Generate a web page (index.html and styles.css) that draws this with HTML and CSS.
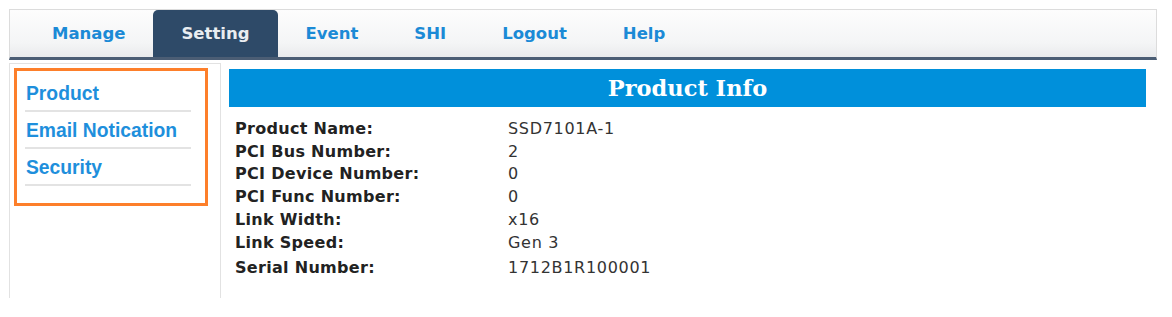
FILE: index.html
```html
<!DOCTYPE html>
<html lang="en">
<head>
    <meta charset="UTF-8">
    <title>Setting - Product Info</title>
    <link rel="stylesheet" href="styles.css">
</head>
<body>
<div class="page">
    <div class="topnav">
        <a class="tab">Manage</a>
        <a class="tab active">Setting</a>
        <a class="tab">Event</a>
        <a class="tab">SHI</a>
        <a class="tab">Logout</a>
        <a class="tab">Help</a>
    </div>

    <div class="main">
        <div class="sidebar">
            <ul class="side-menu">
                <li>Product</li>
                <li>Email Notication</li>
                <li>Security</li>
            </ul>
        </div>

        <div class="content">
            <div class="content-title">Product Info</div>
            <div class="info">
                <div class="info-line"><span class="label">Product Name:</span><span class="value">SSD7101A-1</span></div>
                <div class="info-line"><span class="label">PCI Bus Number:</span><span class="value">2</span></div>
                <div class="info-line"><span class="label">PCI Device Number:</span><span class="value">0</span></div>
                <div class="info-line"><span class="label">PCI Func Number:</span><span class="value">0</span></div>
                <div class="info-line"><span class="label">Link Width:</span><span class="value">x16</span></div>
                <div class="info-line"><span class="label">Link Speed:</span><span class="value">Gen 3</span></div>
                <div class="info-line last"><span class="label">Serial Number:</span><span class="value">1712B1R100001</span></div>
            </div>
        </div>
    </div>
</div>
</body>
</html>
```

FILE: styles.css
```css
*{
    padding: 0;
    margin: 0;
    box-sizing: border-box;
}
body{
    background: #fff;
    font-family: "DejaVu Sans", Verdana, sans-serif;
}
.page{
    padding: 9px 15px 0 9px;
}
.topnav{
    display: flex;
    height: 51px;
    padding-left: 14px;
    border: 1px solid #dcdcdc;
    border-bottom: 3px solid #4b5d74;
    background: linear-gradient(#fdfdfd, #f4f5f6 70%, #e9eaec);
}
.tab{
    display: block;
    padding: 1px 28px 0;
    line-height: 46px;
    font-size: 16.5px;
    font-weight: bold;
    color: #1b8ad6;
}
.tab.active{
    background: #2e4a68;
    color: #e9edf1;
    border-radius: 5px 5px 0 0;
}
.main{
    display: flex;
    margin-top: 3px;
}
.sidebar{
    width: 212px;
    height: 235px;
    border: 1px solid #e2e2e2;
    border-bottom: none;
    padding: 4px 12px 0 4px;
}
.side-menu{
    list-style: none;
    border: 3px solid #fd7f2a;
    padding: 4px 14px 17px 8px;
}
.side-menu li{
    height: 37px;
    line-height: 37px;
    border-bottom: 2px solid #e3e3e3;
    font-family: "Liberation Sans", Arial, sans-serif;
    font-size: 19.3px;
    font-weight: bold;
    color: #1e8fdc;
    padding-left: 1px;
}
.content{
    flex: 1;
    margin-left: 8px;
    margin-right: 11px;
    padding-top: 6px;
}
.content-title{
    height: 38px;
    line-height: 38px;
    background: #0090db;
    color: #fff;
    text-align: center;
    font-family: "DejaVu Serif", Georgia, serif;
    font-size: 22.5px;
    font-weight: bold;
}
.info{
    padding: 11px 0 0 6px;
}
.info-line{
    display: flex;
    line-height: 22.7px;
    font-size: 16px;
}
.info-line.last{
    margin-top: 3px;
}
.label{
    width: 273px;
    font-weight: bold;
    letter-spacing: 0.3px;
    color: #222;
}
.value{
    letter-spacing: 0.7px;
    color: #333;
}
```
